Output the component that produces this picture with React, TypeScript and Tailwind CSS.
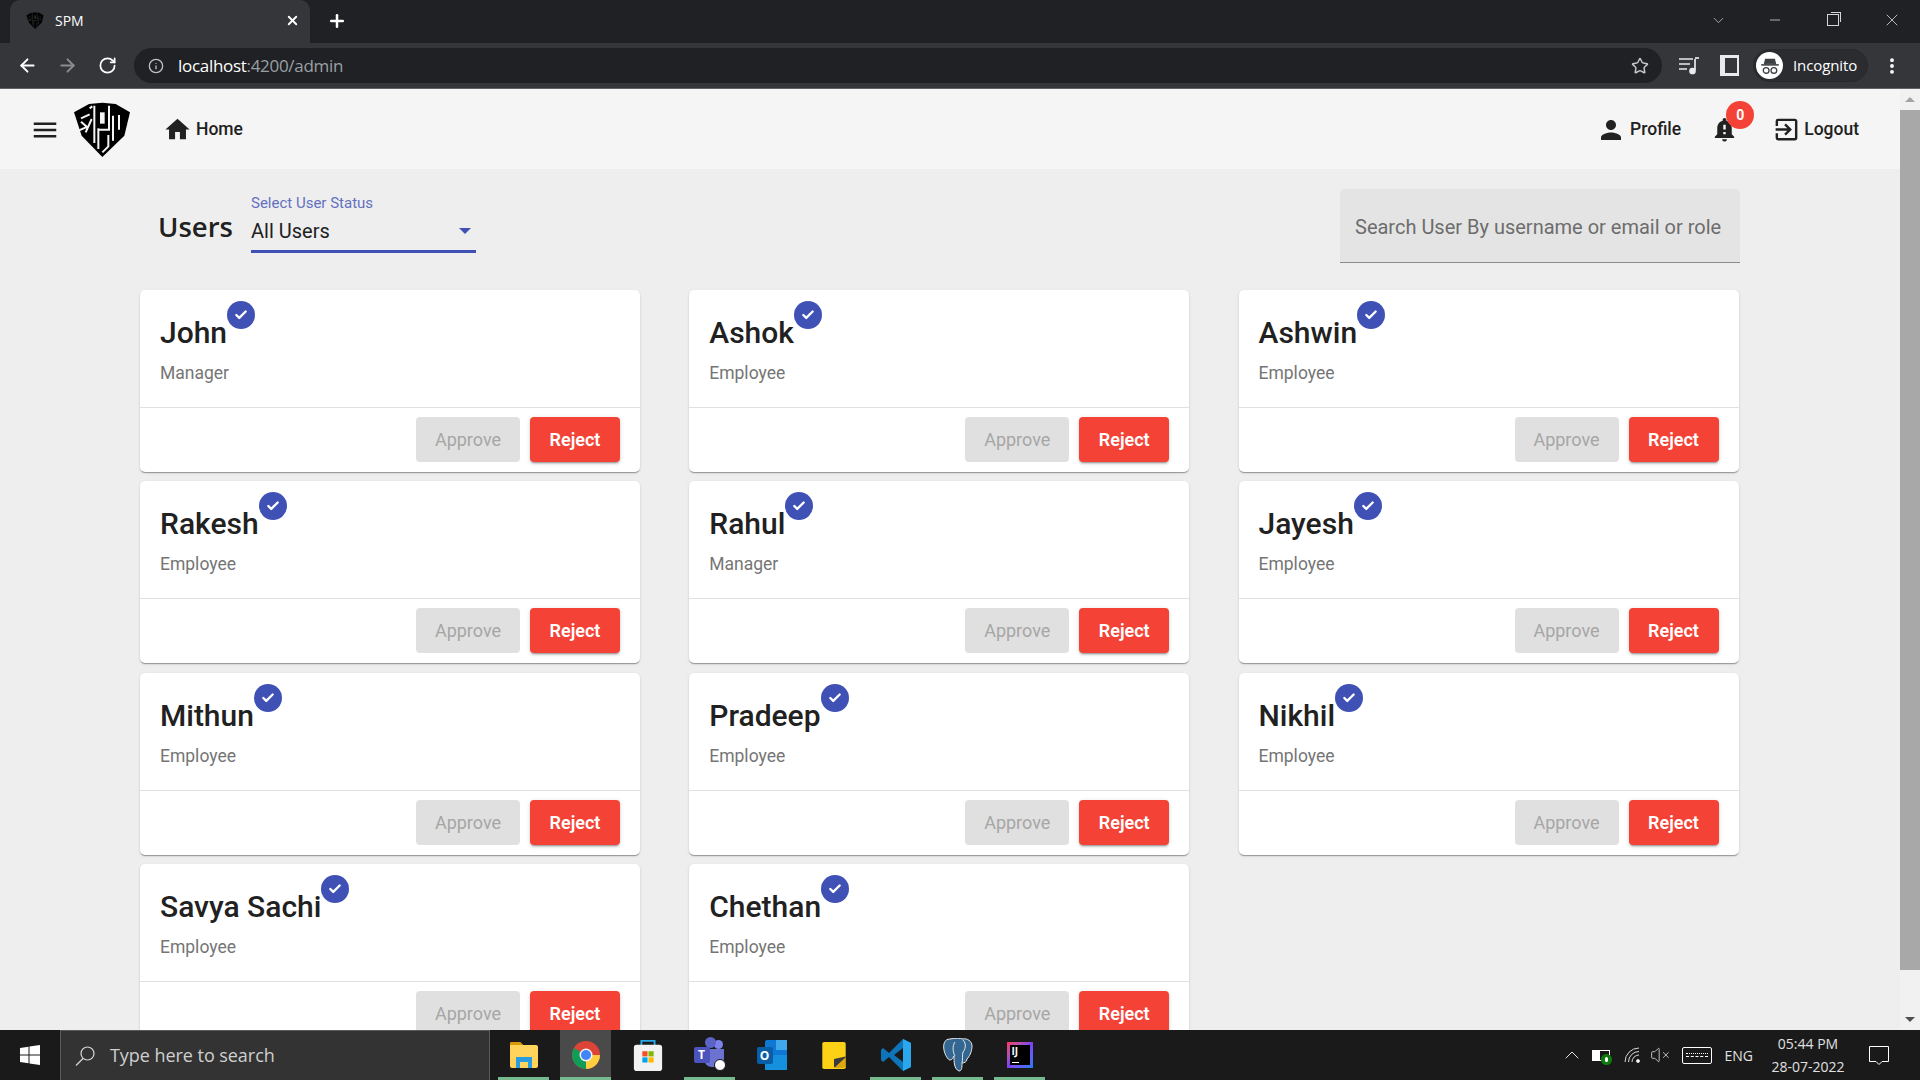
import { ArrowLeft, ArrowRight, Check, ChevronDown, ChevronUp, Info, Minus, MoreVertical, Plus, RotateCw, Star, VolumeX, X } from 'lucide-react'
import { MdExitToApp, MdHome, MdMenu, MdNotificationImportant, MdPerson } from 'react-icons/md'

const users = [
  { name: 'John', role: 'Manager' },
  { name: 'Ashok', role: 'Employee' },
  { name: 'Ashwin', role: 'Employee' },
  { name: 'Rakesh', role: 'Employee' },
  { name: 'Rahul', role: 'Manager' },
  { name: 'Jayesh', role: 'Employee' },
  { name: 'Mithun', role: 'Employee' },
  { name: 'Pradeep', role: 'Employee' },
  { name: 'Nikhil', role: 'Employee' },
  { name: 'Savya Sachi', role: 'Employee' },
  { name: 'Chethan', role: 'Employee' },
]

function Logo({ className, cut = '#f5f5f5' }: { className: string; cut?: string }) {
  return (
    <svg viewBox="0 0 198 192" className={className}>
      <path d="M15 40 L60 15 L100 11 L140 15 L183 40 L166 110 L100 174 L38 110 Z" fill="#000" />
      <g fill="none" stroke={cut} strokeWidth="6">
        <path d="M36 58 L62 46 M62 28 L70 22 M30 94 L54 84 L36 68 M68 60 L50 100" />
        <path d="M76 20 L76 132 M120 20 L120 92 L88 92" />
        <path d="M88 88 L88 150" />
        <path d="M118 108 L118 142 L100 160" />
        <path d="M132 50 L132 125 M150 48 L150 92" />
      </g>
      <rect x="93" y="40" width="14" height="34" fill={cut} />
    </svg>
  )
}

function BrowserChrome() {
  return (
    <div className="shrink-0 text-white font-['Open_Sans',sans-serif]">
      {/* tab strip */}
      <div className="flex h-[43px] items-start bg-[#202124]">
        <div className="ml-[10px] flex h-[43px] w-[300px] items-center rounded-t-[10px] bg-[#35363a] pb-[2px] pl-[15px] pr-[10px]">
          <Logo cut="#35363a" className="h-[20px] w-[20px]" />
          <span className="ml-[10px] flex-1 text-[14px]">SPM</span>
          <X size={15} strokeWidth={3} />
        </div>
        <Plus size={20} strokeWidth={3} className="ml-[17px] mt-[11px]" />
        <div className="ml-auto mt-[10px] flex items-center text-[#d5d6d8]">
          <ChevronDown size={17} strokeWidth={1} className="mr-[40px]" />
          <Minus size={16} strokeWidth={1.2} className="mr-[44px]" />
          <div className="relative mr-[43px] h-[12px] w-[12px] border border-[#d5d6d8]">
            <div className="absolute -right-[3px] -top-[3px] h-[10px] w-[10px] border-r border-t border-[#d5d6d8]" />
          </div>
          <X size={20} strokeWidth={1} className="mr-[18px]" />
        </div>
      </div>
      {/* toolbar */}
      <div className="flex h-[46px] items-center border-b border-[#5f6368] bg-[#35363a]">
        <ArrowLeft size={21} strokeWidth={2.2} className="ml-[17px]" />
        <ArrowRight size={21} strokeWidth={2.2} className="ml-[19px] text-[#8b8c8e]" />
        <RotateCw size={19} strokeWidth={2.2} className="ml-[20px]" />
        <div className="ml-[17px] flex h-[35px] w-[1528px] items-center rounded-full bg-[#202124] pl-[14px] pr-[13px]">
          <Info size={16} strokeWidth={2} className="text-[#bdc1c6]" />
          <span className="ml-[14px] flex-1 text-[17px] tracking-[-0.3px]">
            localhost<span className="text-[#9aa0a6]">:4200/admin</span>
          </span>
          <Star size={18} strokeWidth={2} className="text-[#c4c7ca]" />
        </div>
        <svg viewBox="0 0 20 20" className="ml-[17px] h-5 w-5" fill="none" stroke="#e8eaed" strokeWidth="1.7">
          <path d="M0 3H14M0 8H11M0 13H8M16 3V14" />
          <circle cx="13.5" cy="15" r="2.5" fill="#e8eaed" />
          <path d="M16 2H20" />
        </svg>
        <div className="ml-[21px] flex h-[21px] w-[19px] justify-center border-[3px] border-x-[5px] border-[#e8eaed] border-r-[2px]" />
        <div className="ml-[14px] flex h-[33px] w-[115px] items-center rounded-full border border-[#27282b] bg-[#2b2c30] pl-[2px]">
          <div className="flex h-[27px] w-[27px] items-center justify-center rounded-full bg-white">
            <svg viewBox="0 0 20 20" className="h-[22px] w-[22px]" fill="none" stroke="#3c4043" strokeWidth="1.2">
              <path d="M6 4H14L15 8H5Z" fill="#3c4043" />
              <path d="M2 9H18" strokeWidth="1.4" />
              <circle cx="6.5" cy="14" r="2.6" />
              <circle cx="13.5" cy="14" r="2.6" />
            </svg>
          </div>
          <span className="ml-[10px] text-[15px] tracking-[-0.1px]">Incognito</span>
        </div>
        <MoreVertical size={20} strokeWidth={2.6} className="ml-[14px]" />
      </div>
    </div>
  )
}

function NavBar() {
  return (
    <div className="flex h-[80px] shrink-0 items-center bg-[#f5f5f5] pt-[1px] text-[17.5px] font-medium text-[#212121]">
      <MdMenu size={30} className="ml-[30px]" />
      <Logo className="ml-[9px] mt-[2px] h-[64px] w-[66px]" />
      <MdHome size={29} className="ml-[28px]" />
      <span className="ml-[4px]">Home</span>
      <MdPerson size={30} className="ml-auto" />
      <span className="ml-[4px]">Profile</span>
      <div className="relative ml-[29px]">
        <MdNotificationImportant size={29} />
        <span className="absolute -right-[15px] -top-[14px] flex h-[28px] w-[28px] items-center justify-center rounded-full bg-[#f44336] text-[14px] font-bold text-white">0</span>
      </div>
      <MdExitToApp size={29} className="ml-[33px] -scale-x-100 rotate-180" />
      <span className="ml-[3px] mr-[41px]">Logout</span>
    </div>
  )
}

function UserCard({ name, role }: { name: string; role: string }) {
  return (
    <div className="h-[182px] rounded-[5px] bg-white shadow-[0_2px_1px_-1px_rgba(0,0,0,0.2),0_1px_1px_0_rgba(0,0,0,0.14),0_1px_3px_0_rgba(0,0,0,0.12)]">
      <div className="h-[118px] border-b border-[#e0e0e0] px-5 pt-[23px]">
        <div className="relative inline-block text-[30px] leading-[40px] font-medium text-[#212121]">
          {name}
          <span className="absolute -right-[28px] -top-[12px] flex h-[28px] w-[28px] items-center justify-center rounded-full bg-[#3f51b5] text-white">
            <Check size={14} strokeWidth={4} />
          </span>
        </div>
        <div className="mt-[8px] text-[17.5px] leading-[24px] text-[#757575]">{role}</div>
      </div>
      <div className="flex justify-end gap-[10px] px-5 pt-[9px]">
        <div className="flex h-[45px] w-[104px] items-center justify-center rounded-[4px] bg-[#e0e0e0] text-[18px] text-[#a6a6a6]">Approve</div>
        <div className="flex h-[45px] w-[90px] items-center justify-center rounded-[4px] bg-[#f44336] text-[18px] font-semibold text-white shadow-[0_3px_1px_-2px_rgba(0,0,0,0.2),0_2px_2px_0_rgba(0,0,0,0.14),0_1px_5px_0_rgba(0,0,0,0.12)]">Reject</div>
      </div>
    </div>
  )
}

function Content() {
  return (
    <div className="flex-1 overflow-hidden bg-[#eeeeee] pl-[140px]">
      <div className="flex w-[1600px] items-start pt-[20px]">
        <h1 className="ml-[18px] mt-[18px] w-[74px] font-['Open_Sans',sans-serif] text-[27.5px] leading-[40px] font-semibold text-[#212121]">Users</h1>
        <div className="ml-[19px] w-[225px] border-b-[3px] border-[#3f51b5]">
          <div className="mt-[4px] text-[15px] leading-[20px] text-[#3f51b5] opacity-80">Select User Status</div>
          <div className="flex h-[37px] items-center justify-between pb-[2px] pr-[5px] text-[20px] text-[#212121]">
            All Users
            <span className="h-0 w-0 border-x-[6px] border-t-[6px] border-x-transparent border-t-[#3f51b5]" />
          </div>
        </div>
        <div className="ml-auto flex h-[74px] w-[400px] items-center rounded-t-[5px] border-b border-[#8c8c8c] bg-[#e4e4e4] px-[15px] pt-[2px] text-[20px] text-[#6d6d6d]">
          Search User By username or email or role
        </div>
      </div>
      <div className="mt-[27px] grid grid-cols-[repeat(3,500px)] gap-x-[49.25px] gap-y-[9.3px]">
        {users.map((u) => (
          <UserCard key={u.name} name={u.name} role={u.role} />
        ))}
      </div>
    </div>
  )
}

function ScrollBar() {
  return (
    <div className="flex w-5 shrink-0 flex-col items-center bg-[#f1f1f1]">
      <div className="flex h-[21px] items-center">
        <span className="h-0 w-0 border-x-[5px] border-b-[5px] border-x-transparent border-b-[#a3a3a3]" />
      </div>
      <div className="h-[860px] w-full bg-[#a8a8a8]" />
      <div className="mt-auto flex h-[21px] items-center">
        <span className="h-0 w-0 border-x-[5px] border-t-[5px] border-x-transparent border-t-[#505050]" />
      </div>
    </div>
  )
}

function StoreIcon() {
  return (
    <svg viewBox="0 0 30 34" className="h-[32px] w-[30px]">
      <path d="M8 8V2H22V8" fill="none" stroke="#29a8e8" strokeWidth="2" />
      <rect y="6" width="30" height="28" rx="3" fill="#f2f2f2" />
      <rect x="9" y="13" width="5.5" height="5.5" fill="#f25022" />
      <rect x="15.5" y="13" width="5.5" height="5.5" fill="#7fba00" />
      <rect x="9" y="19.5" width="5.5" height="5.5" fill="#00a4ef" />
      <rect x="15.5" y="19.5" width="5.5" height="5.5" fill="#ffb900" />
    </svg>
  )
}

function TaskIcon({ children, active, on }: { children: React.ReactNode; active?: boolean; on?: boolean }) {
  return (
    <div className={`relative flex h-[50px] w-[51px] items-center justify-center ${active ? 'bg-[#4a4a4a]' : ''}`}>
      {children}
      {on && <div className="absolute inset-x-0 bottom-0 h-[3px] bg-[#76b98f]" />}
    </div>
  )
}

function TaskBar() {
  return (
    <div className="flex h-[50px] shrink-0 items-center bg-[#1a1a1a] font-['Open_Sans',sans-serif] text-white">
      <div className="flex w-[60px] shrink-0 justify-center">
        <svg viewBox="0 0 20 20" className="h-5 w-5" fill="#fff">
          <path d="M0 3L8.5 1.8V9.5H0ZM9.5 1.6L20 0V9.5H9.5ZM0 10.5H8.5V18.2L0 17ZM9.5 10.5H20V20L9.5 18.4Z" />
        </svg>
      </div>
      <div className="flex h-[50px] w-[430px] shrink-0 items-center border border-b-0 border-[#5a5a5a] bg-[#333333] pl-[14px] text-[18px] text-[#cfcfcf]">
        <svg viewBox="0 0 20 20" className="h-[20px] w-[20px]" fill="none" stroke="#d8d8d8" strokeWidth="1.2">
          <circle cx="12.5" cy="7.5" r="6.5" />
          <path d="M8 12.5L1 19.5" />
        </svg>
        <span className="ml-[15px] tracking-[-0.05px]">Type here to search</span>
      </div>
      <div className="ml-[8px] flex gap-[11px]">
        <TaskIcon on>
          <svg viewBox="0 0 28 26" className="h-[26px] w-[28px]">
            <path d="M0 2a2 2 0 0 1 2-2H10L13 3H26a2 2 0 0 1 2 2V24a2 2 0 0 1-2 2H2a2 2 0 0 1-2-2Z" fill="#ffd35c" />
            <path d="M0 2a2 2 0 0 1 2-2H10L13 3H0Z" fill="#d99a08" />
            <path d="M6 15H22V26H18V20H10V26H6Z" fill="#2b9ce0" />
          </svg>
        </TaskIcon>
        <TaskIcon active on>
          <svg viewBox="0 0 28 28" className="h-[28px] w-[28px]">
            <circle cx="14" cy="14" r="14" fill="#db4437" />
            <path d="M1.9 7A14 14 0 0 0 14 28L14 14Z" fill="#0f9d58" />
            <path d="M14 14H28A14 14 0 0 1 14 28Z" fill="#ffcd40" />
            <circle cx="14" cy="14" r="6.5" fill="#f1f3f4" />
            <circle cx="14" cy="14" r="5" fill="#4285f4" />
          </svg>
        </TaskIcon>
        <TaskIcon>
          <StoreIcon />
        </TaskIcon>
        <TaskIcon on>
          <div className="relative h-[32px] w-[32px]">
            <div className="absolute right-[3px] top-[1px] h-[9px] w-[9px] rounded-full bg-[#7b83eb]" />
            <div className="absolute left-[11px] top-[-2px] h-[11px] w-[11px] rounded-full bg-[#5b63c4]" />
            <div className="absolute left-[10px] top-[10px] h-[18px] w-[20px] rounded-b-[8px] bg-[#6b72cf]" />
            <div className="absolute left-0 top-[8px] flex h-[16px] w-[16px] items-center justify-center rounded-[2px] bg-[#4b53bc] text-[12px] font-bold text-white">T</div>
            <div className="absolute bottom-0 right-0 h-[12px] w-[12px] rounded-full border border-[#1a1a1a] bg-white" />
          </div>
        </TaskIcon>
        <TaskIcon>
          <div className="relative h-[30px] w-[30px]">
            <div className="absolute right-0 top-0 h-[30px] w-[22px] rounded-[2px] bg-[#0f78d4]" />
            <div className="absolute right-0 top-0 h-[10px] w-[11px] bg-[#40a8ea]" />
            <div className="absolute left-[8px] top-[15px] h-[15px] w-[22px] bg-[#1490df]" />
            <div className="absolute left-0 top-[7px] flex h-[17px] w-[16px] items-center justify-center rounded-[2px] bg-[#0a5ea8] text-[12px] font-bold text-white">O</div>
          </div>
        </TaskIcon>
        <TaskIcon>
          <svg viewBox="0 0 26 30" className="h-[27px] w-[26px]">
            <rect width="26" height="30" rx="2" fill="#fcd116" />
            <path d="M13 28V19L26 16V26L24 28Z" fill="#3a3a3a" />
            <path d="M14 28L26 17V28Z" fill="#e0a80d" />
          </svg>
        </TaskIcon>
        <TaskIcon on>
          <svg viewBox="0 0 30 32" className="h-[32px] w-[30px]">
            <path d="M22 0L30 4V28L22 32L8 18L2 23L0 21V11L2 9L8 14ZM22 9L13 16L22 23Z" fill="#0f75bb" />
            <path d="M22 0L30 4V28L22 32Z" fill="#2ba7ee" />
          </svg>
        </TaskIcon>
        <TaskIcon on>
          <svg viewBox="0 0 30 34" className="h-[34px] w-[30px]">
            <path d="M7 1C1 1 0 7 1 12C2 17 5 22 7 22C9 22 10 20 11 18C11 24 11 31 16 33C19 33 19 29 19 25C21 25 24 24 24 21C26 19 29 14 29 8C29 3 24 0 20 1C17 0 12 0 7 1Z" fill="#336791" stroke="#e8e8e8" strokeWidth="1" />
            <path d="M12 4C9 8 10 15 12 18M20 2C24 6 22 12 20 14C19 17 20 22 19 25" fill="none" stroke="#e8e8e8" strokeWidth="1" />
          </svg>
        </TaskIcon>
        <TaskIcon on>
          <div className="flex h-[26px] w-[26px] bg-gradient-to-br from-[#fe2857] via-[#7b3ff2] to-[#087cfa] p-[3px]">
            <div className="flex h-full w-full flex-col justify-between bg-black px-[2px] pb-[2px] pt-[1px]">
              <span className="text-[10px] leading-[10px] font-bold text-white">IJ</span>
              <span className="h-[1px] w-[7px] bg-white" />
            </div>
          </div>
        </TaskIcon>
      </div>
      <div className="ml-auto flex items-center text-[#e0e0e0]">
        <ChevronUp size={24} strokeWidth={1} />
        <div className="relative ml-[8px] h-[11px] w-[18px] border border-white">
          <div className="h-full w-[7px] bg-white" />
          <div className="absolute -bottom-[5px] -right-[3px] flex h-[11px] w-[11px] items-center justify-center rounded-full bg-[#107c10]">
            <div className="h-[5px] w-[3px] rounded-full bg-white" />
          </div>
        </div>
        <svg viewBox="0 0 16 16" className="ml-[14px] h-[16px] w-[16px]" fill="none" stroke="#d8d8d8" strokeWidth="1">
          <path d="M1 15A14 14 0 0 1 15 1M4.5 15A10.5 10.5 0 0 1 15 4.5M8 15A7 7 0 0 1 15 8" />
          <circle cx="14" cy="14" r="1.5" fill="#fff" />
        </svg>
        <VolumeX size={20} strokeWidth={1} className="ml-[10px]" />
        <div className="ml-[12px] flex h-[17px] w-[30px] flex-col justify-center gap-[2px] rounded-[2px] border border-white px-[3px]">
          <div className="h-[1px] border-t border-dotted border-white" />
          <div className="h-[1px] border-t border-dashed border-white" />
        </div>
        <span className="ml-[13px] text-[14px]">ENG</span>
        <div className="ml-[15px] flex w-[80px] flex-col items-center text-[14px] leading-[23px]">
          <span>05:44 PM</span>
          <span>28-07-2022</span>
        </div>
        <svg viewBox="0 0 20 19" className="ml-[21px] mr-[31px] h-[19px] w-[20px]" fill="none" stroke="#fff" strokeWidth="1">
          <path d="M0.5 0.5H19.5V15.5H13L10 18.5L7 15.5H0.5Z" />
        </svg>
      </div>
    </div>
  )
}

export default function App() {
  return (
    <div className="flex h-screen flex-col overflow-hidden font-['Roboto',sans-serif]">
      <BrowserChrome />
      <div className="flex min-h-0 flex-1">
        <div className="flex min-w-0 flex-1 flex-col">
          <NavBar />
          <Content />
        </div>
        <ScrollBar />
      </div>
      <TaskBar />
    </div>
  )
}
